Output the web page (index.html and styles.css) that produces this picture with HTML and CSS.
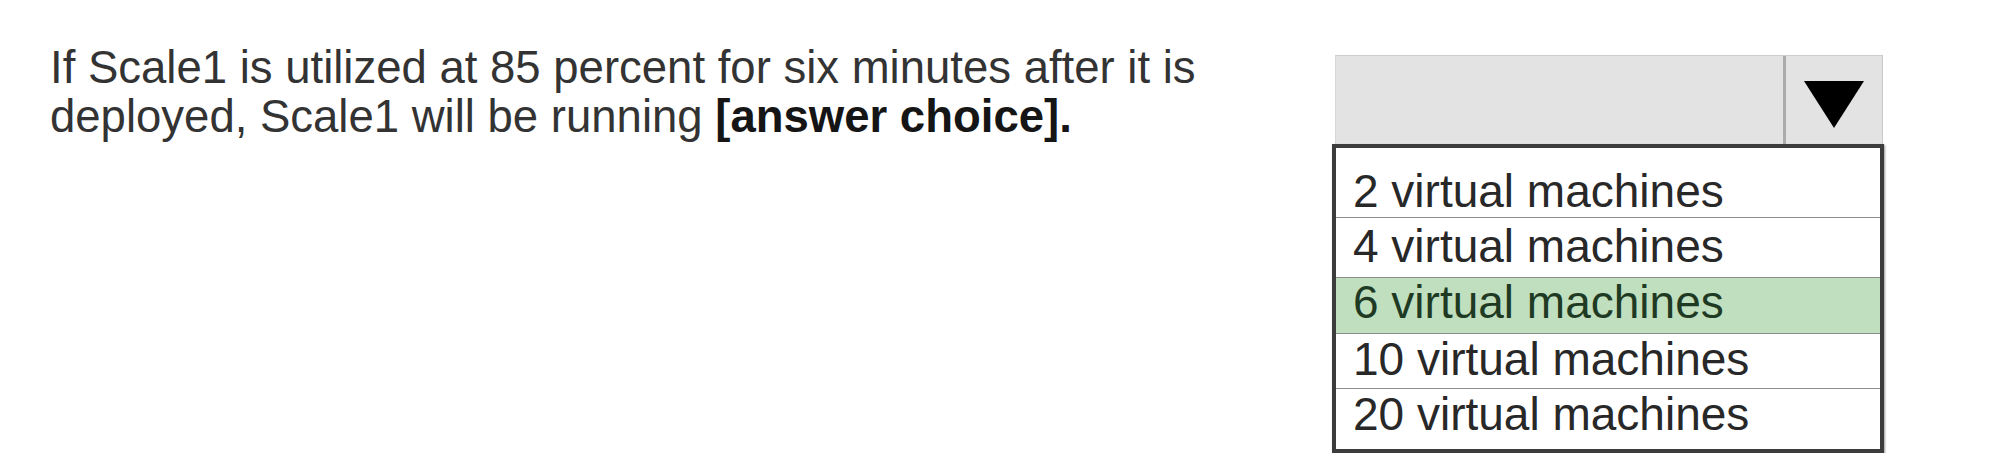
FILE: index.html
```html
<!DOCTYPE html>
<html lang="en">
<head>
<meta charset="utf-8">
<title>Answer choice</title>
<link rel="stylesheet" href="styles.css">
</head>
<body>
<div class="page">
  <p class="question">If Scale1 is utilized at 85 percent for six minutes after it is<br>deployed, Scale1 will be running <strong>[answer choice].</strong></p>
  <div class="dropdown">
    <div class="select">
      <div class="select-field"></div>
      <div class="select-btn">
        <svg class="arrow" width="60" height="47" viewBox="0 0 60 47"><polygon points="0,0 60,0 30,47" fill="#000"/></svg>
      </div>
    </div>
    <ul class="options">
      <li class="opt opt-first">2 virtual machines</li>
      <li class="opt opt-second">4 virtual machines</li>
      <li class="opt opt-selected">6 virtual machines</li>
      <li class="opt">10 virtual machines</li>
      <li class="opt opt-last">20 virtual machines</li>
    </ul>
  </div>
</div>
</body>
</html>
```
FILE: styles.css
```css
html, body {
  margin: 0;
  padding: 0;
  background: #ffffff;
}
.page {
  display: flex;
  align-items: flex-start;
  padding: 43px 0 0 50px;
  font-family: "Liberation Sans", Arial, sans-serif;
}
.question {
  margin: 0;
  width: 1282px;
  flex: none;
  font-size: 45.5px;
  line-height: 49px;
  color: #333333;
  white-space: nowrap;
}
.question strong {
  font-weight: bold;
  color: #151515;
}
.dropdown {
  flex: none;
  width: 552px;
  margin-top: 12px;
}
.select {
  display: flex;
  height: 89px;
  margin: 0 1px 0 3px;
  background: #e3e3e3;
  border-top: 1px solid #cdcdcd;
  border-left: 1px solid #d6d6d6;
  border-right: 1px solid #c8c8c8;
  box-sizing: border-box;
}
.select-field {
  flex: 1;
}
.select-btn {
  width: 99px;
  border-left: 3px solid #ababab;
  display: flex;
  justify-content: center;
  align-items: flex-start;
  padding-top: 25px;
  box-sizing: border-box;
}
.arrow {
  display: block;
}
.options {
  list-style: none;
  margin: 0;
  padding: 0;
  border: 4px solid #3c3c3c;
  border-top-width: 4px;
  box-shadow: 1px 1px 2px #9a9a9a;
  background: #ffffff;
  font-size: 46px;
  color: #282828;
}
.opt {
  height: 55px;
  box-sizing: border-box;
  padding: 2px 0 0 17px;
  line-height: 46px;
  white-space: nowrap;
  border-bottom: 1px solid #8c8c8c;
}
.opt-first {
  height: 70px;
  padding-top: 20px;
}
.opt-second {
  height: 60px;
  padding-top: 5px;
}
.opt-selected {
  height: 56px;
  padding-top: 1px;
  background: #bfdfbf;
  color: #1f3a23;
}
.opt-last {
  height: 60px;
  border-bottom: none;
}
```
